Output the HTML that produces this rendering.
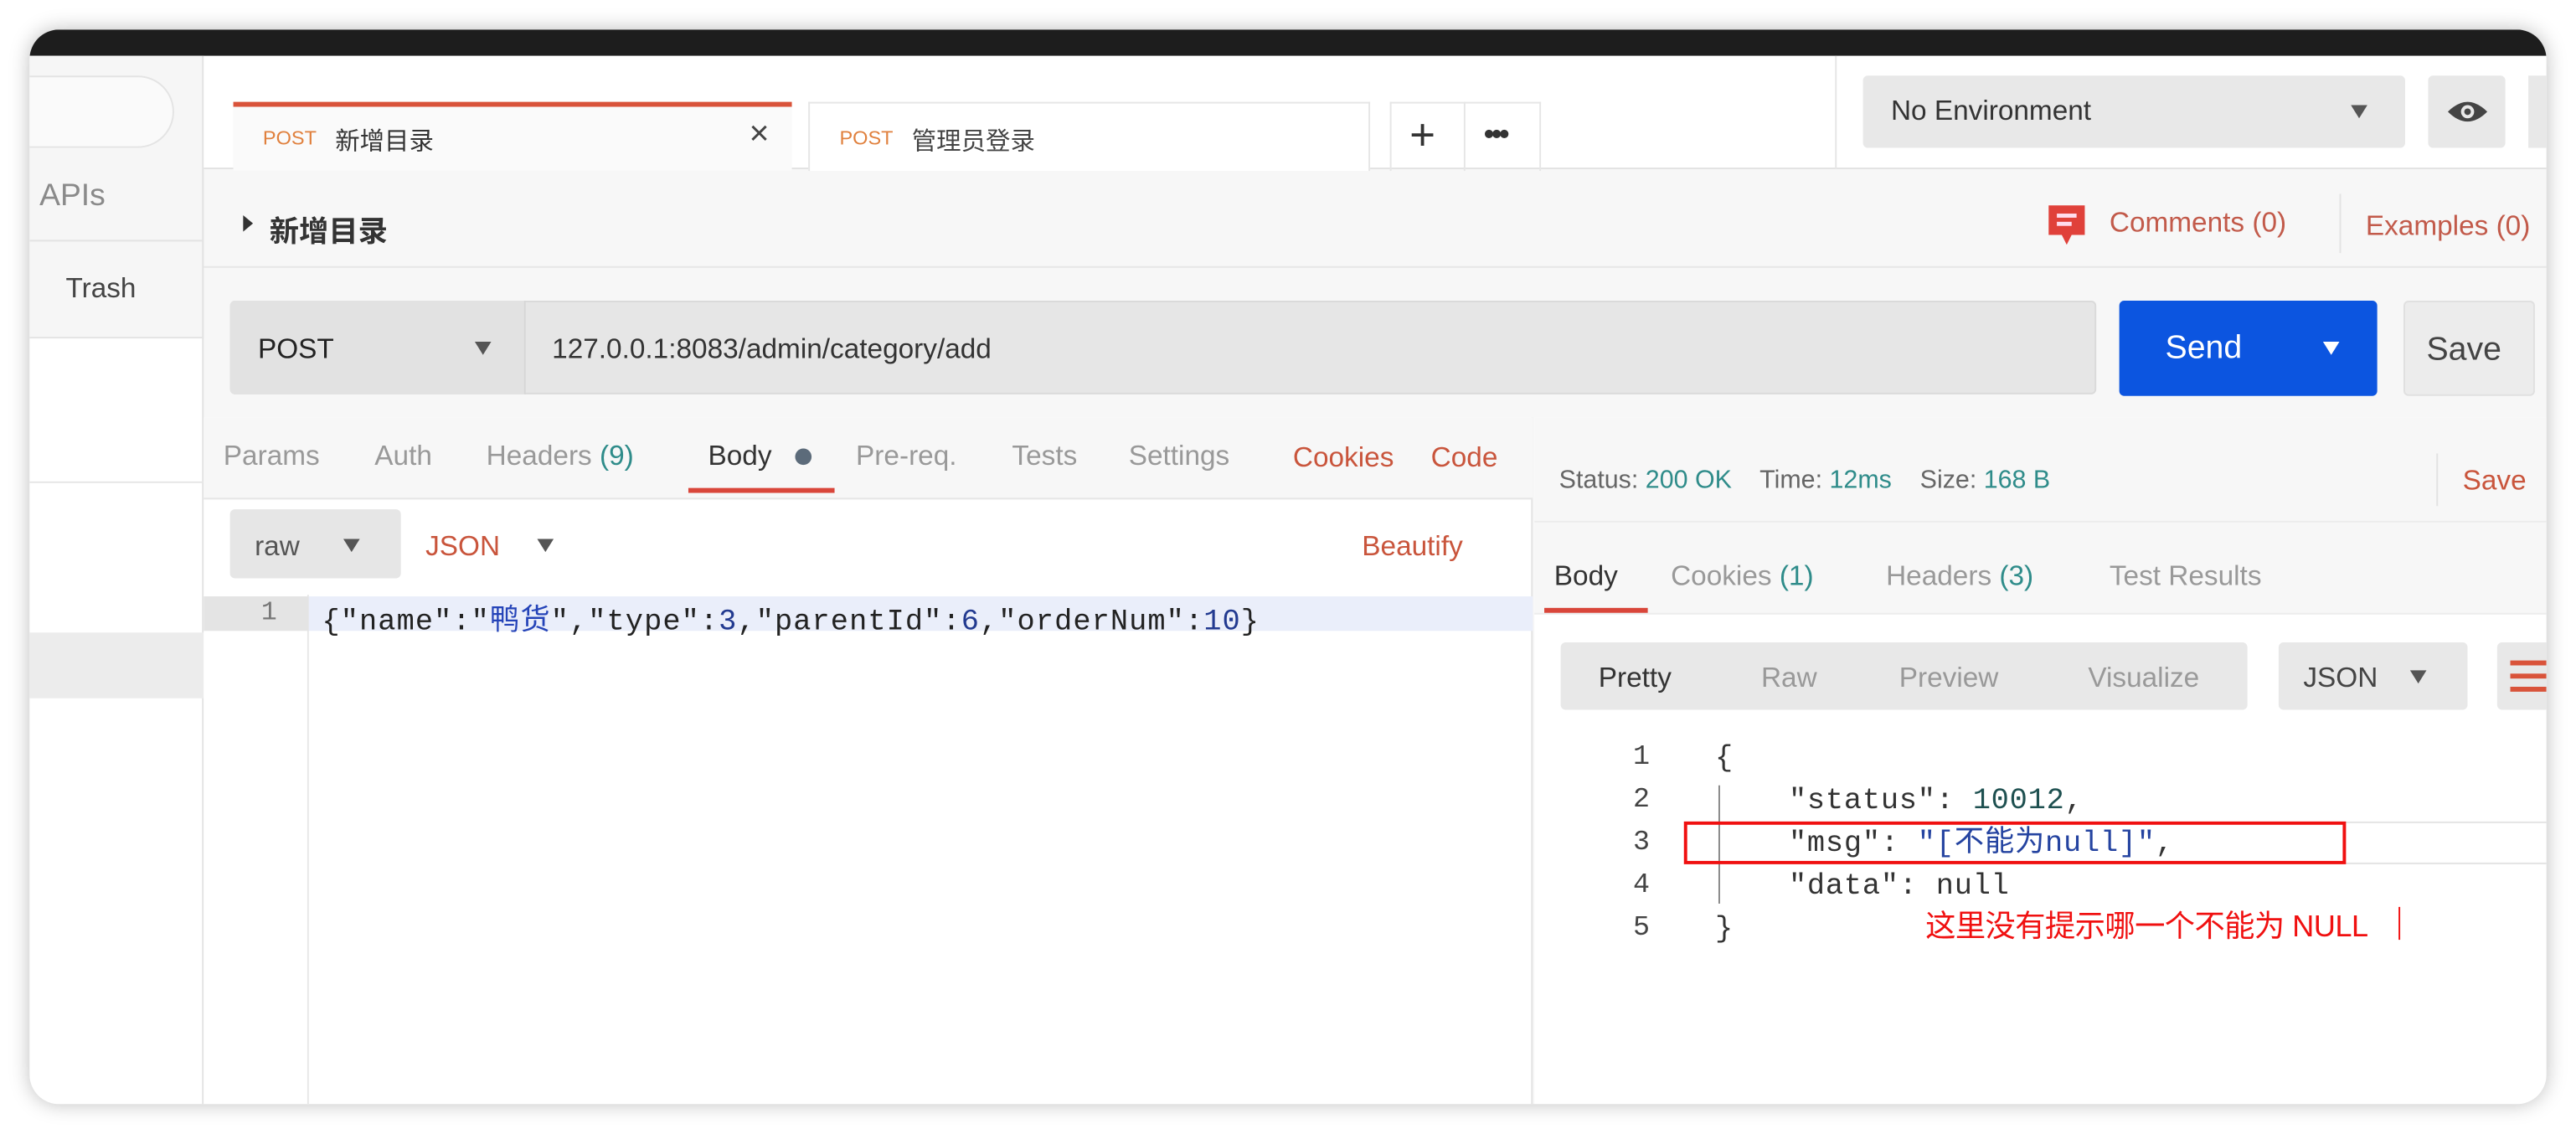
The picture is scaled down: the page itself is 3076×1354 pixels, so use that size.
<!DOCTYPE html>
<html><head><meta charset="utf-8">
<style>
*{margin:0;padding:0;box-sizing:border-box}
html,body{width:3076px;height:1354px;overflow:hidden;background:#fff}
#s{position:absolute;left:0;top:0;width:1568px;height:690.3px;transform:scale(1.96173);transform-origin:0 0;font-family:"Liberation Sans","Noto Sans CJK SC",sans-serif;color:#333}
.a{position:absolute;white-space:nowrap}
.win{position:absolute;left:18px;top:18px;width:1532px;height:654px;border-radius:18px;overflow:hidden;background:#f7f7f7;box-shadow:0 0 12px rgba(0,0,0,.25)}
.mono{font-family:"Liberation Mono","DejaVu Sans Mono","Noto Sans CJK SC",monospace}
.g{color:#8a8a8a}.r{color:#c9553c}.t{color:#2f8c8a}
.caret{display:block;width:0;height:0;border-left:5px solid transparent;border-right:5px solid transparent;border-top:8px solid #555}
</style></head><body><div id="s">
<div class="win">
 <div class="a" style="left:0;top:0;width:1532px;height:16px;background:#1d1d1d"></div>
 <div class="a" style="left:0;top:16px;width:106px;height:638px;background:#fff;border-right:1px solid #e2e2e2"></div>
 <div class="a" style="left:0;top:16px;width:106px;height:171px;background:#f6f6f6;border-right:1px solid #e2e2e2"></div>
 <div class="a" style="left:-40px;top:28px;width:128px;height:44px;border:1px solid #e4e4e4;border-radius:22px;background:#fafafa"></div>
 <div class="a g" style="left:6px;top:91px;font-size:19px">APIs</div>
 <div class="a" style="left:0;top:128px;width:106px;height:1px;background:#e3e3e3"></div>
 <div class="a" style="left:22px;top:148px;font-size:17px;color:#444">Trash</div>
 <div class="a" style="left:0;top:187px;width:106px;height:1px;background:#e3e3e3"></div>
 <div class="a" style="left:0;top:275px;width:106px;height:1px;background:#e6e6e6"></div>
 <div class="a" style="left:0;top:367px;width:106px;height:40px;background:#ececec"></div>
 <div class="a" style="left:106px;top:16px;width:1426px;height:69px;background:#fff;border-bottom:1px solid #e2e2e2"></div>
 <div class="a" style="left:124px;top:44px;width:340px;height:42px;background:#fafafa;border-top:3px solid #d9533a"></div>
 <div class="a" style="left:142px;top:59px;font-size:12px;color:#e0803d">POST</div>
 <div class="a" style="left:186px;top:57px;font-size:15px;color:#333">新增目录</div>
 <div class="a" style="left:438px;top:52px;font-size:21px;color:#444">×</div>
 <div class="a" style="left:474px;top:44px;width:342px;height:42px;background:#fff;border:1px solid #e6e6e6;border-bottom:none"></div>
 <div class="a" style="left:493px;top:59px;font-size:12px;color:#e0803d">POST</div>
 <div class="a" style="left:537px;top:57px;font-size:15px;color:#444">管理员登录</div>
 <div class="a" style="left:828px;top:44px;width:92px;height:42px;border:1px solid #e6e6e6;border-bottom:none"></div>
 <div class="a" style="left:873px;top:44px;width:1px;height:42px;background:#e6e6e6"></div>
 <div class="a" style="left:840px;top:49px;font-size:27px;color:#333;font-weight:300">+</div>
 <div class="a" style="left:885px;top:54px;font-size:19px;color:#333;letter-spacing:-2px">•••</div>
 <div class="a" style="left:1099px;top:16px;width:1px;height:69px;background:#e6e6e6"></div>
 <div class="a" style="left:1116px;top:28px;width:330px;height:44px;background:#e8e8e8;border-radius:3px"></div>
 <div class="a" style="left:1133px;top:40px;font-size:17px;color:#333">No Environment</div>
 <div class="a" style="left:1413px;top:46px"><span class="caret"></span></div>
 <div class="a" style="left:1460px;top:28px;width:47px;height:44px;background:#e8e8e8;border-radius:3px"></div>
 <svg class="a" style="left:1471px;top:40px" width="26" height="20" viewBox="0 0 26 20"><path d="M1 10 Q13 -2 25 10 Q13 22 1 10Z" fill="#444"/><circle cx="13" cy="10" r="4" fill="#e8e8e8"/><circle cx="13" cy="10" r="2" fill="#444"/></svg>
 <div class="a" style="left:1521px;top:28px;width:20px;height:44px;background:#e8e8e8"></div>
 <div class="a" style="left:130px;top:113px;width:0;height:0;border-top:5px solid transparent;border-bottom:5px solid transparent;border-left:6px solid #333"></div>
 <div class="a" style="left:146px;top:109px;font-size:18px;color:#333;font-weight:bold">新增目录</div>
 <svg class="a" style="left:1227px;top:106px" width="26" height="26" viewBox="0 0 26 26"><path d="M2 1H24V19H16L13 25L10 19H2Z" fill="#e0413a"/><rect x="7" y="6" width="12" height="2.5" fill="#fde"/><rect x="7" y="11" width="9" height="2.5" fill="#fde"/></svg>
 <div class="a" style="left:1266px;top:108px;font-size:17px;color:#c25a4a">Comments (0)</div>
 <div class="a" style="left:1406px;top:100px;width:1px;height:36px;background:#e3e3e3"></div>
 <div class="a" style="left:1422px;top:110px;font-size:17px;color:#c25a4a">Examples (0)</div>
 <div class="a" style="left:106px;top:144px;width:1426px;height:1px;background:#e6e6e6"></div>
 <div class="a" style="left:122px;top:165px;width:1136px;height:57px;background:#e6e6e6;border-radius:3px;border:1px solid #dadada"></div>
 <div class="a" style="left:122px;top:165px;width:180px;height:57px;background:#e2e2e2;border-right:1px solid #d6d6d6;border-radius:3px 0 0 3px"></div>
 <div class="a" style="left:139px;top:185px;font-size:17px;color:#222">POST</div>
 <div class="a" style="left:271px;top:190px"><span class="caret"></span></div>
 <div class="a" style="left:318px;top:185px;font-size:17px;color:#333">127.0.0.1:8083/admin/category/add</div>
 <div class="a" style="left:1272px;top:165px;width:157px;height:58px;background:#0c55e0;border-radius:3px"></div>
 <div class="a" style="left:1300px;top:183px;font-size:20px;color:#fff">Send</div>
 <div class="a" style="left:1396px;top:190px"><span class="caret" style="border-top-color:#fff"></span></div>
 <div class="a" style="left:1445px;top:165px;width:80px;height:58px;background:#ececec;border-radius:3px;border:1px solid #e0e0e0"></div>
 <div class="a" style="left:1459px;top:184px;font-size:20px;color:#444">Save</div>
 <div class="a" style="left:106px;top:236px;width:809px;height:418px;background:#fff;border-right:1px solid #e2e2e2"></div>
 <div class="a" style="left:106px;top:236px;width:809px;height:50px;background:#f7f7f7;border-bottom:1px solid #e6e6e6"></div>
 <div class="a" style="font-size:17px;top:250px;left:118px;color:#999">Params</div>
 <div class="a" style="font-size:17px;top:250px;left:210px;color:#999">Auth</div>
 <div class="a" style="font-size:17px;top:250px;left:278px;color:#999">Headers <span class="t">(9)</span></div>
 <div class="a" style="font-size:17px;top:250px;left:413px;color:#333">Body</div>
 <div class="a" style="left:466px;top:255px;width:10px;height:10px;border-radius:50%;background:#5c6b7a"></div>
 <div class="a" style="left:401px;top:279px;width:89px;height:3px;background:#d9463a"></div>
 <div class="a" style="font-size:17px;top:250px;left:503px;color:#999">Pre-req.</div>
 <div class="a" style="font-size:17px;top:250px;left:598px;color:#999">Tests</div>
 <div class="a" style="font-size:17px;top:250px;left:669px;color:#999">Settings</div>
 <div class="a r" style="font-size:17px;top:251px;left:769px">Cookies</div>
 <div class="a r" style="font-size:17px;top:251px;left:853px">Code</div>
 <div class="a" style="left:122px;top:292px;width:104px;height:42px;background:#e6e6e6;border-radius:3px"></div>
 <div class="a" style="left:137px;top:305px;font-size:17px;color:#555">raw</div>
 <div class="a" style="left:191px;top:310px"><span class="caret"></span></div>
 <div class="a r" style="left:241px;top:305px;font-size:17px">JSON</div>
 <div class="a" style="left:309px;top:310px"><span class="caret"></span></div>
 <div class="a r" style="left:811px;top:305px;font-size:17px">Beautify</div>
 <div class="a" style="left:106px;top:344px;width:64px;height:310px;background:#fff;border-right:1px solid #e8e8e8"></div>
 <div class="a" style="left:106px;top:345px;width:64px;height:21px;background:#e4e4e4"></div>
 <div class="a" style="left:170px;top:345px;width:745px;height:21px;background:#eaeefa"></div>
 <div class="a mono" style="left:141px;top:346px;font-size:16px;color:#777">1</div>
 <div class="a mono" style="left:178px;top:345px;font-size:18px;color:#222;letter-spacing:0.55px">{"name":"<span style="color:#2443b8">鸭货</span>","type":<span style="color:#223a90">3</span>,"parentId":<span style="color:#223a90">6</span>,"orderNum":<span style="color:#223a90">10</span>}</div>
 <div class="a" style="left:916px;top:236px;width:616px;height:418px;background:#fff"></div>
 <div class="a" style="left:916px;top:236px;width:616px;height:64px;background:#f7f7f7;border-bottom:1px solid #ececec"></div>
 <div class="a" style="left:931px;top:266px;font-size:15.5px;color:#666">Status: <span class="t">200 OK</span>&nbsp;&nbsp;&nbsp; Time: <span class="t">12ms</span>&nbsp;&nbsp;&nbsp; Size: <span class="t">168 B</span></div>
 <div class="a" style="left:1465px;top:258px;width:1px;height:32px;background:#e3e3e3"></div>
 <div class="a r" style="left:1481px;top:265px;font-size:17px">Save</div>
 <div class="a" style="left:916px;top:300px;width:616px;height:56px;background:#f7f7f7;border-bottom:1px solid #ececec"></div>
 <div class="a" style="left:928px;top:323px;font-size:17px;color:#333">Body</div>
 <div class="a" style="left:922px;top:352px;width:63px;height:3px;background:#d9463a"></div>
 <div class="a" style="left:999px;top:323px;font-size:17px;color:#999">Cookies <span class="t">(1)</span></div>
 <div class="a" style="left:1130px;top:323px;font-size:17px;color:#999">Headers <span class="t">(3)</span></div>
 <div class="a" style="left:1266px;top:323px;font-size:17px;color:#999">Test Results</div>
 <div class="a" style="left:932px;top:373px;width:418px;height:41px;background:#e8e8e8;border-radius:3px"></div>
 <div class="a" style="left:955px;top:385px;font-size:17px;color:#333">Pretty</div>
 <div class="a" style="left:1054px;top:385px;font-size:17px;color:#999">Raw</div>
 <div class="a" style="left:1138px;top:385px;font-size:17px;color:#999">Preview</div>
 <div class="a" style="left:1253px;top:385px;font-size:17px;color:#999">Visualize</div>
 <div class="a" style="left:1369px;top:373px;width:115px;height:41px;background:#e8e8e8;border-radius:3px"></div>
 <div class="a" style="left:1384px;top:385px;font-size:17px;color:#444">JSON</div>
 <div class="a" style="left:1449px;top:390px"><span class="caret"></span></div>
 <div class="a" style="left:1502px;top:373px;width:30px;height:41px;background:#e8e8e8;border-radius:3px 0 0 3px"></div>
 <div class="a" style="left:1510px;top:384px;width:22px;height:3px;background:#d9533a"></div>
 <div class="a" style="left:1510px;top:392px;width:22px;height:3px;background:#d9533a"></div>
 <div class="a" style="left:1510px;top:400px;width:22px;height:3px;background:#d9533a"></div>
 <div class="a" style="left:1007px;top:482px;width:525px;height:26px;border-top:1px solid #e3e3e3;border-bottom:1px solid #e3e3e3"></div>
 <div class="a" style="left:1028px;top:460px;width:1px;height:72px;background:#888"></div>
 <div class="a mono" style="left:976px;top:431px;font-size:17px;color:#444;line-height:26px">1<br>2<br>3<br>4<br>5</div>
 <div class="a mono" style="left:1026px;top:431px;font-size:18px;color:#333;line-height:26px;letter-spacing:0.4px">{<br>&nbsp;&nbsp;&nbsp;&nbsp;"status": <span style="color:#1e5050">10012</span>,<br>&nbsp;&nbsp;&nbsp;&nbsp;"msg": <span style="color:#2443a0">"[不能为null]"</span>,<br>&nbsp;&nbsp;&nbsp;&nbsp;"data": null<br>}</div>
 <div class="a" style="left:1007px;top:482px;width:403px;height:26px;border:2px solid #f01010"></div>
 <div class="a" style="left:1154px;top:532px;font-size:18.5px;color:#f01010;letter-spacing:-0.3px">这里没有提示哪一个不能为 NULL</div>
 <div class="a" style="left:1442px;top:534px;width:1px;height:20px;background:#f01010"></div>
</div>
</div></body></html>
